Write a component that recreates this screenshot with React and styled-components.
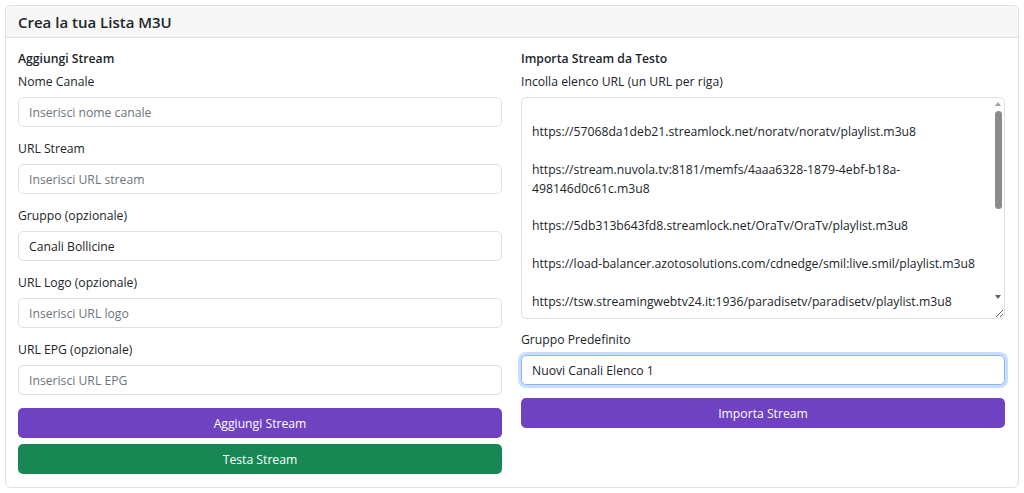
import React, { useState } from 'react'
import styled, { createGlobalStyle } from 'styled-components'

const GlobalStyle = createGlobalStyle`
    body {
        margin: 0;
        background: #ffffff;
        font-family: "Open Sans", "Noto Sans", sans-serif;
        color: #212529;
    }
    * { box-sizing: border-box; }
`;

const Card = styled.div`
    margin: 5px;
    border: 1px solid #dcdfe3;
    border-radius: 6px;
    background: #ffffff;
    overflow: hidden;
`;

const CardHeader = styled.div`
    height: 32px;
    display: flex;
    align-items: center;
    padding: 0 12px;
    background: #f7f7f7;
    border-bottom: 1px solid #dcdfe3;
`;

const Title = styled.h1`
    margin: 0;
    font-size: 15px;
    font-weight: 600;
    color: #212529;
`;

const CardBody = styled.div`
    display: grid;
    grid-template-columns: 1fr 1fr;
    column-gap: 19px;
    padding: 11px 13px 13px 12px;
`;

const Column = styled.div`
    display: flex;
    flex-direction: column;
`;

const SectionTitle = styled.h2`
    margin: 0 0 3px;
    font-size: 12.2px;
    line-height: 20px;
    font-weight: 600;
`;

const Label = styled.label`
    display: block;
    font-size: 12.2px;
    line-height: 20px;
    margin-bottom: 5px;
`;

const Field = styled.div`
    display: flex;
    flex-direction: column;
    margin-bottom: ${p => p.$mb ?? 12}px;
`;

const Input = styled.input`
    height: 30px;
    width: 100%;
    padding: 0 10px;
    font-family: inherit;
    font-size: 12.2px;
    color: #212529;
    border: 1px solid #dee2e6;
    border-radius: 5px;
    outline: none;
    caret-color: #212529;
    &::placeholder { color: #6c757d; }
    &:focus {
        border-color: #86b7fe;
        box-shadow: 0 0 0 3px rgba(13, 110, 253, 0.22);
    }
`;

const TextAreaWrap = styled.div`
    position: relative;
    height: 222px;
`;

const TextArea = styled.textarea`
    display: block;
    height: 222px;
    width: 100%;
    padding: 6px 22px 6px 10px;
    font-family: inherit;
    font-size: 12.2px;
    line-height: 18.9px;
    color: #212529;
    border: 1px solid #dee2e6;
    border-radius: 5px;
    resize: vertical;
    outline: none;
    overflow: hidden;
`;

/* finto scrollbar classico sopra la textarea */
const ScrollBar = styled.div`
    position: absolute;
    top: 1px;
    right: 1px;
    bottom: 14px;
    width: 12px;
    display: flex;
    flex-direction: column;
    align-items: center;
    padding-top: 4px;
    pointer-events: none;
`;

const Arrow = styled.div`
    width: 0;
    height: 0;
    border-left: 3.5px solid transparent;
    border-right: 3.5px solid transparent;
    ${p => (p.$down
        ? 'border-top: 4px solid #606060; margin-top: auto; margin-bottom: 6px;'
        : 'border-bottom: 4px solid #a0a0a0;')}
`;

const Thumb = styled.div`
    width: 7px;
    height: 98px;
    margin-top: 5px;
    border-radius: 4px;
    background: #8c8c8c;
`;

const Button = styled.button`
    height: 30px;
    width: 100%;
    border: none;
    border-radius: 5px;
    font-family: inherit;
    font-size: 12.2px;
    color: #ffffff;
    background: ${p => (p.$variant === 'success' ? '#198754' : '#6f42c1')};
    margin-bottom: ${p => p.$mb || 0}px;
    cursor: pointer;
`;

const urls = [
    '',
    'https://57068da1deb21.streamlock.net/noratv/noratv/playlist.m3u8',
    '',
    'https://stream.nuvola.tv:8181/memfs/4aaa6328-1879-4ebf-b18a-498146d0c61c.m3u8',
    '',
    'https://5db313b643fd8.streamlock.net/OraTv/OraTv/playlist.m3u8',
    '',
    'https://load-balancer.azotosolutions.com/cdnedge/smil:live.smil/playlist.m3u8',
    '',
    'https://tsw.streamingwebtv24.it:1936/paradisetv/paradisetv/playlist.m3u8',
    '',
    'https://hls.rtsp.it/live/canale1/playlist.m3u8',
    '',
    'https://hls.rtsp.it/live/canale2/playlist.m3u8',
    '',
    'https://hls.rtsp.it/live/canale3/playlist.m3u8',
].join('\n');

export default function App() {
    const [gruppo, setGruppo] = useState('Canali Bollicine');
    const [predef, setPredef] = useState('Nuovi Canali Elenco 1 ');
    const [text, setText] = useState(urls);

    return (
        <>
            <GlobalStyle />
            <Card>
                <CardHeader>
                    <Title>Crea la tua Lista M3U</Title>
                </CardHeader>
                <CardBody>
                    <Column>
                        <SectionTitle>Aggiungi Stream</SectionTitle>
                        <Field>
                            <Label>Nome Canale</Label>
                            <Input placeholder="Inserisci nome canale" />
                        </Field>
                        <Field>
                            <Label>URL Stream</Label>
                            <Input placeholder="Inserisci URL stream" />
                        </Field>
                        <Field>
                            <Label>Gruppo (opzionale)</Label>
                            <Input value={gruppo} onChange={e => setGruppo(e.target.value)} />
                        </Field>
                        <Field>
                            <Label>URL Logo (opzionale)</Label>
                            <Input placeholder="Inserisci URL logo" />
                        </Field>
                        <Field $mb={13}>
                            <Label>URL EPG (opzionale)</Label>
                            <Input placeholder="Inserisci URL EPG" />
                        </Field>
                        <Button $mb={6}>Aggiungi Stream</Button>
                        <Button $variant="success">Testa Stream</Button>
                    </Column>
                    <Column>
                        <SectionTitle>Importa Stream da Testo</SectionTitle>
                        <Field $mb={11}>
                            <Label>Incolla elenco URL (un URL per riga)</Label>
                            <TextAreaWrap>
                                <TextArea value={text} onChange={e => setText(e.target.value)} />
                                <ScrollBar>
                                    <Arrow />
                                    <Thumb />
                                    <Arrow $down />
                                </ScrollBar>
                            </TextAreaWrap>
                        </Field>
                        <Field $mb={13}>
                            <Label>Gruppo Predefinito</Label>
                            <Input autoFocus value={predef} onChange={e => setPredef(e.target.value)} />
                        </Field>
                        <Button>Importa Stream</Button>
                    </Column>
                </CardBody>
            </Card>
        </>
    );
}
